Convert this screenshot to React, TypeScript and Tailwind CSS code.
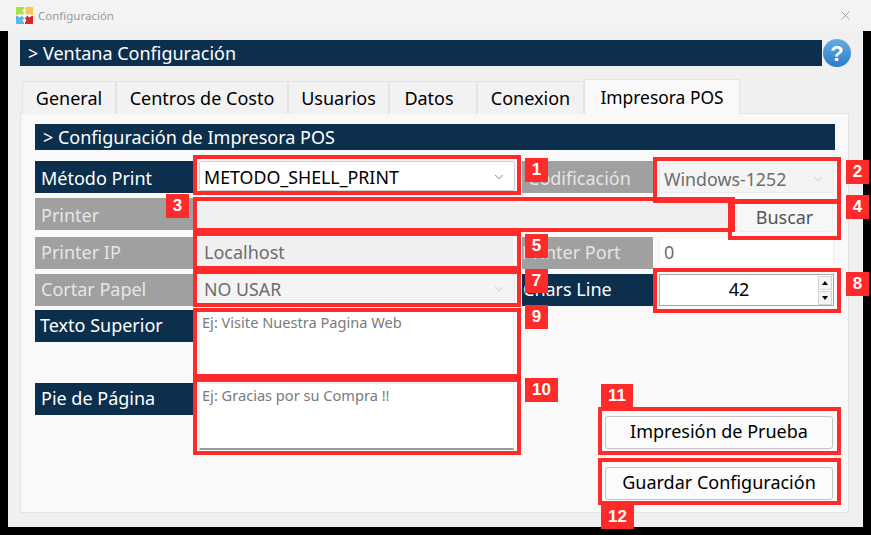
import { ChevronDown, X } from "lucide-react";

const font = "font-['Noto_Sans','Open_Sans',sans-serif]";

function Label({
  text,
  active,
  pad = "pl-1.5",
  nudge = "",
  className = "",
}: {
  text: string;
  active?: boolean;
  pad?: string;
  nudge?: string;
  className?: string;
}) {
  return (
    <div
      className={`h-8 flex items-center text-[18px] whitespace-nowrap ${pad} ${nudge} ${
        active ? "bg-[#0b2f4d] text-white" : "bg-[#a0a0a0] text-[#e6e6e6]"
      } ${className}`}
    >
      {text}
    </div>
  );
}

function Select({ value, disabled, className = "" }: { value: string; disabled?: boolean; className?: string }) {
  return (
    <div
      className={`h-[30px] flex items-center justify-between pl-1 pr-2 text-[17.8px] rounded-[2px] border ${
        disabled ? "bg-[#f4f4f4] border-[#ececec] text-[#6d6d6d]" : "bg-white border-[#d0d0d0] text-black"
      } ${className}`}
    >
      <span>{value}</span>
      <ChevronDown className={`w-3.5 h-3.5 ${disabled ? "text-[#c4c4c4]" : "text-[#707070]"}`} strokeWidth={1.5} />
    </div>
  );
}

function TextBox({ placeholder, className }: { placeholder: string; className: string }) {
  return (
    <div
      className={`w-[315px] bg-white border border-[#ececec] border-b-2 border-b-[#999999] pl-0.5 pt-px text-[14.6px] leading-5 text-[#7a7a7a] ${className}`}
    >
      {placeholder}
    </div>
  );
}

function ActionButton({ text }: { text: string }) {
  return (
    <button className="w-[228px] h-[33px] pb-0.5 bg-[#fbfbfb] border border-[#c4c4c4] rounded-[3px] text-[18px] text-black">
      {text}
    </button>
  );
}

function Mark({ className }: { className: string }) {
  return <div className={`absolute border-4 border-[#ff2a2a] pointer-events-none ${className}`} />;
}

function Badge({ n, className }: { n: number; className: string }) {
  return (
    <div
      className={`absolute h-6 flex items-center justify-center bg-[#ff2a2a] text-white font-['Liberation_Sans',sans-serif] font-bold text-[17px] ${className}`}
    >
      {n}
    </div>
  );
}

function PuzzleLogo() {
  return (
    <svg width="17" height="17" viewBox="0 0 17 17" className="shrink-0">
      <rect x="0" y="0" width="8" height="8" fill="#a6e63c" />
      <rect x="9" y="0" width="8" height="8" fill="#ffc64d" />
      <rect x="0" y="9" width="8" height="8" fill="#5ab8ec" />
      <rect x="9" y="9" width="8" height="8" fill="#e0242c" />
      <circle cx="8.5" cy="3.5" r="1.8" fill="#f3f3f3" />
      <circle cx="3.5" cy="8.5" r="1.8" fill="#f3f3f3" />
      <circle cx="13.5" cy="8.5" r="1.8" fill="#f3f3f3" />
      <circle cx="8.5" cy="13.5" r="1.8" fill="#f3f3f3" />
      <rect x="6.5" y="6.5" width="4" height="4" fill="#f3f3f3" />
    </svg>
  );
}

export default function App() {
  const tabs = [
    { label: "General", cls: "w-[94px]" },
    { label: "Centros de Costo", cls: "w-[172px]" },
    { label: "Usuarios", cls: "w-[101px]" },
    { label: "Datos", cls: "w-[88px] pr-2" },
    { label: "Conexion", cls: "w-[107px]" },
  ];

  return (
    <div className={`relative w-[871px] h-[535px] overflow-hidden bg-black ${font}`}>
      {/* Title bar */}
      <div className="h-[31px] bg-[#f3f3f3] flex items-center pl-4 pr-[18px] gap-[5px]">
        <PuzzleLogo />
        <span className="text-[11.5px] text-[#999999]">Configuración</span>
        <X className="ml-auto w-[15px] h-[15px] text-[#8c8c8c]" strokeWidth={1.2} />
      </div>

      {/* Window body */}
      <div className="mx-2 h-[496px] bg-[#f0f0f0] pt-[9px] pl-3 pr-3">
        <div className="flex items-center gap-px h-[26px]">
          <div className="w-[802px] h-[26px] bg-[#0b2f4d] text-white text-[18px] flex items-center pl-2">
            &gt; Ventana Configuración
          </div>
          <div className="w-[28px] h-[28px] rounded-full bg-gradient-to-b from-[#62aee6] to-[#2a7cc7] flex items-center justify-center text-white font-['Liberation_Sans',sans-serif] font-bold text-[22px]">
            ?
          </div>
        </div>

        {/* Tabs */}
        <div className="flex items-end h-[47px] pl-0.5">
          {tabs.map((tab) => (
            <div
              key={tab.label}
              className={`${tab.cls} h-[33px] -mb-px border border-b-0 border-[#e4e4e4] bg-[#f2f2f2] text-[18px] text-black flex items-center justify-center`}
            >
              {tab.label}
            </div>
          ))}
          <div className="relative z-10 w-[156px] h-[35px] -mb-px border border-b-0 border-[#e4e4e4] bg-[#f9f9f9] text-[17.4px] text-black flex items-center justify-center">
            Impresora POS
          </div>
        </div>

        {/* Panel */}
        <div className="w-[829px] h-[400px] bg-[#f9f9f9] border border-[#e4e4e4] pt-2.5 pl-3.5">
          <div className="w-[800px] h-[26px] bg-[#0b2f4d] text-white text-[18px] flex items-center pl-2">
            &gt; Configuración de Impresora POS
          </div>

          <div className="mt-[11px] flex flex-col gap-[5px]">
            <div className="flex">
              <Label text="Método Print" active nudge="pt-0.5" className="w-[158px]" />
              <Select value="METODO_SHELL_PRINT" className="ml-1.5 w-[316px] pt-0.5" />
              <Label text="Codificación" nudge="pt-0.5" className="ml-[7px] w-[131px]" />
              <Select value="Windows-1252" disabled className="ml-1.5 w-[175px] mt-0.5 pt-0.5" />
            </div>
            <div className="flex">
              <Label text="Printer" nudge="pt-0.5" className="w-[158px]" />
              <div className="ml-1.5 w-[528px] h-[31px] bg-[#f0f0f0] border border-[#ececec]" />
              <button className="ml-[9px] w-[97px] h-8 pt-0.5 bg-[#f7f7f7] border border-[#ececec] rounded-[3px] text-[18px] text-[#555555] mt-0.5">
                Buscar
              </button>
            </div>
            <div className="flex">
              <Label text="Printer IP" nudge="pb-0.5" className="w-[158px]" />
              <div className="ml-1.5 w-[314px] h-[30px] bg-[#f0f0f0] border border-[#ececec] flex items-center pl-1 text-[18px] text-[#6d6d6d]">
                Localhost
              </div>
              <Label text="Printer Port" pad="pl-0" nudge="pb-0.5" className="ml-[9px] w-[131px]" />
              <div className="ml-1.5 w-[175px] h-[30px] bg-white border border-[#f0f0f0] flex items-center pl-1 text-[18px] text-[#6d6d6d]">
                0
              </div>
            </div>
            <div className="flex">
              <Label text="Cortar Papel" nudge="pb-0.5" className="w-[158px]" />
              <Select value="NO USAR" disabled className="ml-1.5 w-[316px]" />
              <Label text="Chars Line" active pad="pl-[1px]" nudge="pb-0.5" className="ml-[7px] w-[131px]" />
              <div className="ml-1.5 w-[175px] h-8 bg-white border border-[#a8a8a8] flex items-center text-[18px] text-black">
                <span className="flex-1 text-center pb-0.5">42</span>
                <div className="flex flex-col gap-px pr-px">
                  <div className="w-3.5 h-[14px] bg-[#f4f4f4] border border-[#d4d4d4] flex items-center justify-center">
                    <div className="w-0 h-0 border-x-[3px] border-x-transparent border-b-[4px] border-b-black" />
                  </div>
                  <div className="w-3.5 h-[14px] bg-[#f4f4f4] border border-[#d4d4d4] flex items-center justify-center">
                    <div className="w-0 h-0 border-x-[3px] border-x-transparent border-t-[4px] border-t-black" />
                  </div>
                </div>
              </div>
            </div>
          </div>

          <div className="mt-1 flex">
            <div className="flex flex-col gap-[7px]">
              <div className="flex items-start">
                <Label text="Texto Superior" active pad="pl-[5px]" nudge="pb-0.5" className="w-[158px]" />
                <div className="ml-1.5">
                  <TextBox placeholder="Ej: Visite Nuestra Pagina Web" className="h-[66px]" />
                </div>
              </div>
              <div className="flex items-start">
                <Label text="Pie de Página" active nudge="pb-0.5" className="w-[158px]" />
                <div className="ml-1.5">
                  <TextBox placeholder="Ej: Gracias por su Compra !!" className="h-[67px]" />
                </div>
              </div>
            </div>
            <div className="ml-[91px] pt-[106px] flex flex-col gap-[18px]">
              <ActionButton text="Impresión de Prueba" />
              <ActionButton text="Guardar Configuración" />
            </div>
          </div>
        </div>
      </div>

      {/* Annotation marks over the screenshot */}
      <Mark className="left-[193px] top-[155px] w-[328px] h-[40px]" />
      <Mark className="left-[193px] top-[197px] w-[542px] h-[35px]" />
      <Mark className="left-[193px] top-[232px] w-[328px] h-[38px]" />
      <Mark className="left-[193px] top-[270px] w-[328px] h-[37px]" />
      <Mark className="left-[193px] top-[308px] w-[328px] h-[70px]" />
      <Mark className="left-[193px] top-[378px] w-[328px] h-[77px]" />
      <Mark className="left-[653px] top-[157px] w-[188px] h-[46px]" />
      <Mark className="left-[728px] top-[200px] w-[113px] h-[40px]" />
      <Mark className="left-[653px] top-[268px] w-[188px] h-[45px]" />
      <Mark className="left-[598px] top-[407px] w-[243px] h-[48px]" />
      <Mark className="left-[598px] top-[458px] w-[243px] h-[47px]" />

      <Badge n={1} className="left-[525px] top-[158px] w-[23px]" />
      <Badge n={2} className="left-[846px] top-[160px] w-[23px]" />
      <Badge n={3} className="left-[166px] top-[194px] w-[23px]" />
      <Badge n={4} className="left-[846px] top-[195px] w-[23px]" />
      <Badge n={5} className="left-[525px] top-[234px] w-[23px]" />
      <Badge n={7} className="left-[525px] top-[269px] w-[23px]" />
      <Badge n={8} className="left-[846px] top-[272px] w-[23px]" />
      <Badge n={9} className="left-[525px] top-[305px] w-[23px]" />
      <Badge n={10} className="left-[525px] top-[378px] w-[33px]" />
      <Badge n={11} className="left-[601px] top-[384px] w-[32px]" />
      <Badge n={12} className="left-[601px] top-[505px] w-[33px]" />
    </div>
  );
}
